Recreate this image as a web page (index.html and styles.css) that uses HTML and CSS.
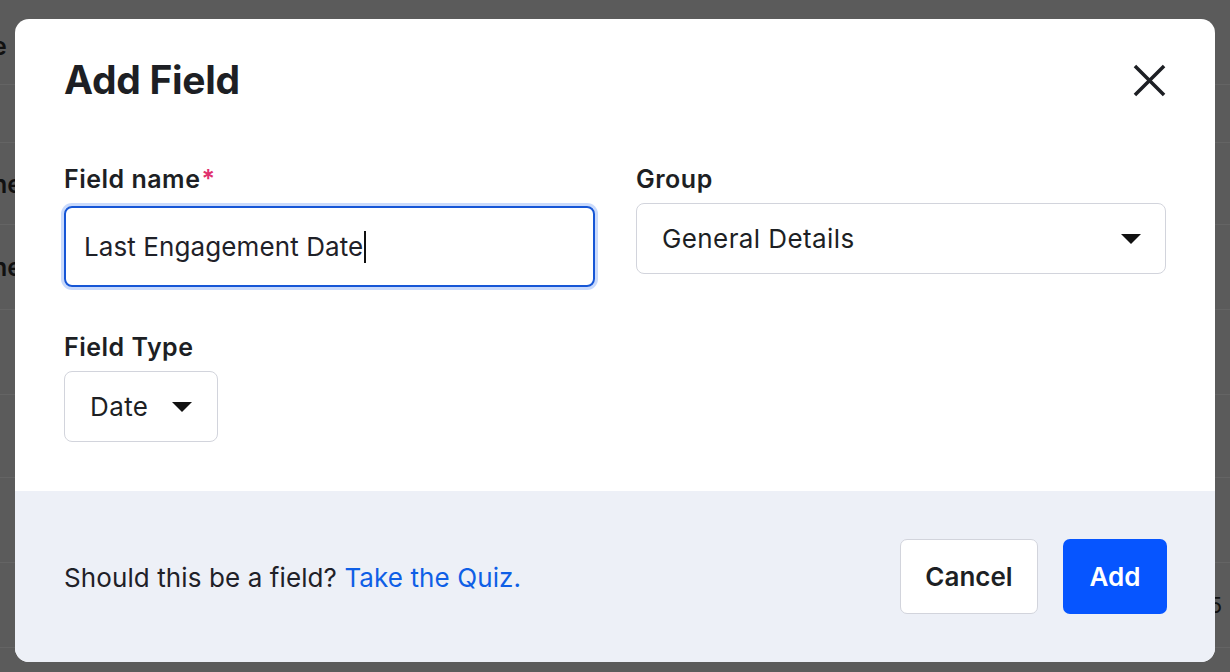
FILE: index.html
```html
<!DOCTYPE html>
<html lang="en">
<head>
<meta charset="utf-8">
<title>Add Field</title>
<link rel="stylesheet" href="styles.css">
</head>
<body>
<div class="backdrop">
  <div class="bg-row r1"><span class="bg-text">e</span></div>
  <div class="bg-row r2"></div>
  <div class="bg-row r3"><span class="bg-text">ne</span></div>
  <div class="bg-row r4"><span class="bg-text">ne</span></div>
  <div class="bg-row r5"></div>
  <div class="bg-row r6"></div>
  <div class="bg-row r7"></div>
  <div class="bg-row r8"><span class="bg-num">5</span></div>
</div>
<div class="modal" role="dialog" aria-labelledby="title">
  <div class="modal-head">
    <h1 id="title" class="title">Add Field</h1>
    <button class="close" aria-label="Close">
      <svg width="34" height="34" viewBox="0 0 34 34"><path d="M2 2 L32 32 M32 2 L2 32" stroke="#1d1f24" stroke-width="3.6" fill="none"/></svg>
    </button>
  </div>
  <div class="modal-body">
    <div class="field">
      <label class="label">Field name<span class="req">*</span></label>
      <div class="input focused"><span>Last Engagement Date</span><span class="cursor"></span></div>
    </div>
    <div class="field">
      <label class="label">Group</label>
      <div class="select wide"><span>General Details</span><span class="caret"></span></div>
    </div>
    <div class="field type">
      <label class="label">Field Type</label>
      <div class="select small"><span>Date</span><span class="caret"></span></div>
    </div>
  </div>
  <div class="modal-foot">
    <p class="hint">Should this be a field? <a class="link" href="#">Take the Quiz.</a></p>
    <div class="actions">
      <button class="btn btn-secondary">Cancel</button>
      <button class="btn btn-primary">Add</button>
    </div>
  </div>
</div>
</body>
</html>
```
FILE: styles.css
```css
* { box-sizing: border-box; }
html, body { margin: 0; padding: 0; }
body {
  width: 1230px;
  height: 672px;
  overflow: hidden;
  background: #5b5b5b;
  font-family: "Inter", "Noto Sans", sans-serif;
  color: #1f2128;
  position: relative;
}
.backdrop {
  display: flex;
  flex-direction: column;
}
.bg-row {
  border-bottom: 1px solid #646464;
  display: flex;
  align-items: center;
  justify-content: space-between;
}
.r1 { height: 85px; padding-top: 8px; }
.r2 { height: 58px; }
.r3 { height: 82px; }
.r4 { height: 85px; }
.r5 { height: 85px; }
.r6 { height: 83px; }
.r7 { height: 85px; }
.r8 { height: 85px; }
.bg-text {
  margin-left: -8px;
  font-size: 25px;
  font-weight: 600;
  color: #111;
}
.bg-num {
  margin-left: auto;
  margin-right: 8px;
  font-size: 22px;
  color: #111;
}
.modal {
  position: absolute;
  left: 15px;
  top: 19px;
  width: 1200px;
  height: 643px;
  background: #fff;
  border-radius: 14px;
  overflow: hidden;
  display: flex;
  flex-direction: column;
}
.modal-head {
  display: flex;
  justify-content: space-between;
  align-items: flex-start;
  padding: 38px 48px 0 49px;
  height: 144px;
  flex-shrink: 0;
}
.title {
  margin: 0;
  font-size: 39px;
  line-height: 46px;
  font-weight: 700;
  letter-spacing: -0.3px;
  color: #1d1f24;
}
.close {
  border: 0;
  background: none;
  padding: 0;
  margin-top: 6px;
  margin-right: 1px;
  width: 34px;
  height: 34px;
  display: flex;
  align-items: center;
  justify-content: center;
}
.close svg { width: 33px; height: 33px; }
.modal-body {
  display: grid;
  grid-template-columns: 531px 530px;
  column-gap: 41px;
  padding: 0 48px 0 49px;
  flex: 1;
  align-content: start;
}
.field { display: flex; flex-direction: column; }
.label {
  font-size: 25px;
  line-height: 32px;
  font-weight: 600;
  letter-spacing: 0.5px;
  color: #1d1f24;
  margin-bottom: 8px;
}
.req { color: #e0306e; margin-left: 1px; }
.input {
  height: 81px;
  border: 2px solid #1656d6;
  border-radius: 8px;
  box-shadow: 0 0 0 3px #c9dafc;
  display: flex;
  align-items: center;
  padding-left: 18px;
  font-size: 26px;
  letter-spacing: 0.1px;
  color: #1f2128;
  margin-top: 3px;
}
.cursor {
  display: inline-block;
  width: 2px;
  height: 32px;
  background: #111;
  margin-left: 1px;
}
.select {
  height: 71px;
  border: 1.5px solid #d2d4dc;
  border-radius: 8px;
  display: flex;
  align-items: center;
  justify-content: space-between;
  font-size: 26px;
  letter-spacing: 0.4px;
  color: #1d1f24;
}
.select.wide { padding: 0 24px 0 25px; }
.select.small { width: 154px; padding: 0 25px 0 25px; }
.caret {
  width: 0;
  height: 0;
  border-left: 10px solid transparent;
  border-right: 10px solid transparent;
  border-top: 10px solid #111;
}
.type { grid-column: 1; margin-top: 44px; }
.modal-foot {
  height: 171px;
  flex-shrink: 0;
  background: #edf0f7;
  display: flex;
  align-items: center;
  justify-content: space-between;
  padding: 0 48px 0 49px;
}
.hint {
  margin: 0;
  font-size: 26px;
  letter-spacing: 0.1px;
  color: #1f2128;
  padding-top: 2px;
}
.link { color: #0f5fe6; text-decoration: none; }
.actions { display: flex; gap: 25px; }
.btn {
  font-family: inherit;
  font-size: 26px;
  font-weight: 600;
  border-radius: 7px;
  height: 75px;
  cursor: pointer;
}
.btn-secondary {
  width: 138px;
  background: #fff;
  border: 1.5px solid #d2d4dc;
  color: #1d1f24;
}
.btn-primary {
  width: 104px;
  background: #0655ff;
  border: 0;
  color: #fff;
}
```
